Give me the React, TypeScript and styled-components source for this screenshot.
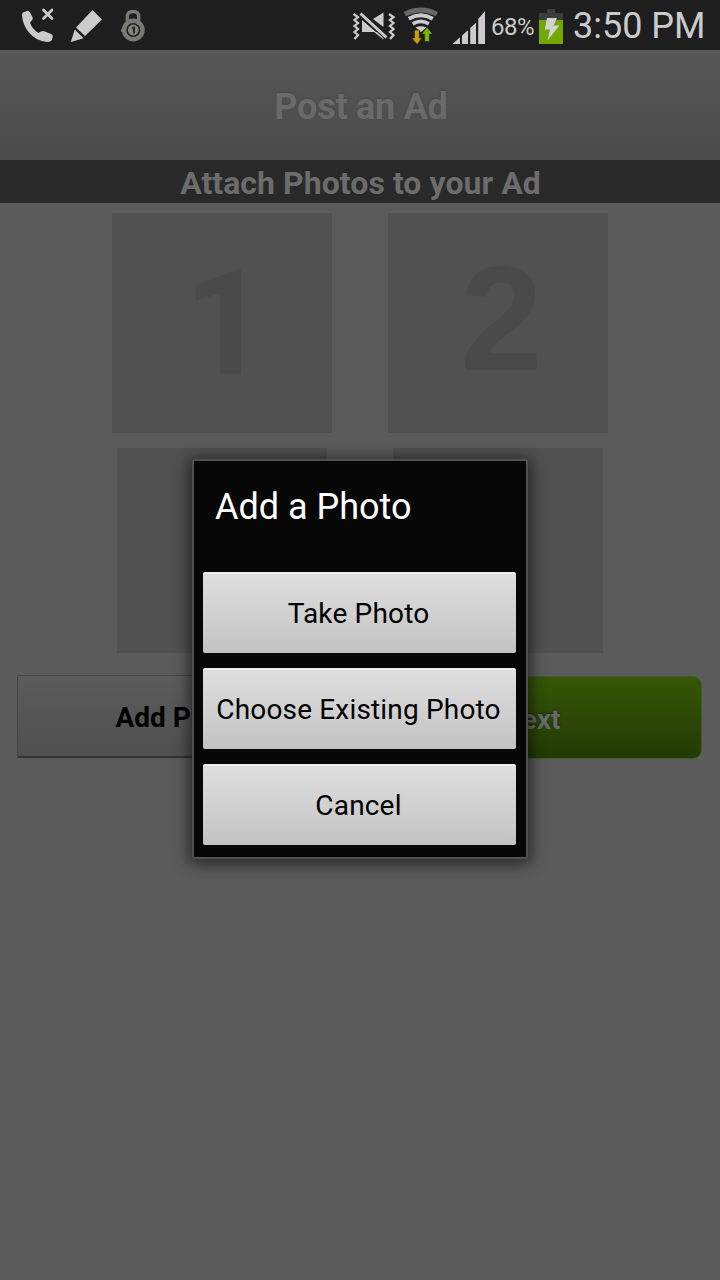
import React from "react";
import styled, { createGlobalStyle } from "styled-components";

const GlobalStyle = createGlobalStyle`
  * { box-sizing: border-box; }
  body { margin: 0; background: #5b5b5b; font-family: Roboto, "Liberation Sans", sans-serif; }
  button { font-family: inherit; border: 0; padding: 0; }
`;

const Screen = styled.div`
  position: relative;
  width: 720px;
  height: 1280px;
  overflow: hidden;
  background: #5b5b5b;
`;

const StatusBar = styled.div`
  display: flex;
  justify-content: space-between;
  height: 50px;
  background: #1e1e1e;
  color: #cbcbcb;
`;

const StatusGroup = styled.div`
  display: flex;
  svg { display: block; }
`;

const BatteryLevel = styled.span`
  width: 48px;
  padding-left: 1px;
  font-size: 24px;
  line-height: 54px;
  letter-spacing: -0.5px;
  white-space: nowrap;
`;

const Clock = styled.span`
  width: 147px;
  font-size: 36px;
  line-height: 53px;
  white-space: nowrap;
`;

const Header = styled.header`
  display: flex;
  align-items: center;
  justify-content: center;
  height: 110px;
  padding: 4px 0 0 2px;
  background: linear-gradient(#575757, #4b4b4b);
  color: #6a6a6a;
  font-size: 36px;
  font-weight: 700;
  letter-spacing: -0.25px;
  text-shadow: 0 -1px 2px #484848;
`;

const SectionTitle = styled.h1`
  display: flex;
  align-items: center;
  justify-content: center;
  height: 43px;
  margin: 0;
  padding: 3px 0 0 1px;
  background: #292929;
  color: #6c6c6c;
  font-size: 32px;
  font-weight: 700;
  letter-spacing: 0.05px;
`;

const SlotRow = styled.div<{ $gap: number; $top: number }>`
  display: flex;
  justify-content: center;
  gap: ${(p) => p.$gap}px;
  padding-top: ${(p) => p.$top}px;
`;

const Slot = styled.div<{ $w: number; $h: number; $serifless?: boolean }>`
  display: flex;
  align-items: center;
  justify-content: center;
  width: ${(p) => p.$w}px;
  height: ${(p) => p.$h}px;
  padding: ${(p) => (p.$serifless ? "4px 0 0 7px" : "0 0 8px 7px")};
  background: #515151;
  color: #4a4a4a;
  font-family: ${(p) => (p.$serifless ? "Roboto" : '"Liberation Sans"')}, sans-serif;
  font-size: ${(p) => (p.$serifless ? 146 : 148)}px;
  line-height: 1;
  font-weight: 700;
`;

const Actions = styled.div`
  display: grid;
  grid-template-columns: 1fr 1fr;
  gap: 8px;
  padding: 22px 18px 0 17px;
`;

const AddButton = styled.button`
  height: 83px;
  padding: 2px 10px 0 0;
  border: 1px solid #464646;
  border-bottom: 2px solid #333;
  border-radius: 2px;
  background: linear-gradient(#5b5b5b, #505050);
  color: #000;
  font-size: 28px;
  font-weight: 700;
`;

const NextButton = styled.button`
  height: 83px;
  margin-top: 1px;
  padding: 4px 3px 0 0;
  border: 1px solid #47582f;
  border-radius: 9px;
  background: linear-gradient(#365706, #233a04);
  color: #686868;
  font-size: 28px;
  font-weight: 700;
  text-shadow: 0 -1px 2px #182800;
`;

const Dialog = styled.section`
  position: absolute;
  left: 192px;
  top: 459px;
  width: 336px;
  height: 400px;
  padding: 0 10px 0 9px;
  border: 2px solid #515151;
  border-radius: 3px;
  background: #070707;
  box-shadow: 0 2px 15px 3px rgba(0, 0, 0, 0.58);
`;

const DialogTitle = styled.h2`
  height: 111px;
  margin: 0;
  padding-left: 12px;
  color: #fff;
  font-size: 36px;
  font-weight: 400;
  line-height: 93px;
`;

const Choices = styled.div`
  display: flex;
  flex-direction: column;
  gap: 15px;
`;

const Choice = styled.button`
  height: 81px;
  padding-right: 2px;
  border-top: 2px solid #ececec;
  border-radius: 2px;
  background: linear-gradient(#dedede, #c3c3c3);
  color: #000;
  font-size: 28px;
  letter-spacing: 0.17px;
  white-space: nowrap;
`;

const NotificationIcons = () => (
  <svg width="160" height="50" viewBox="0 0 160 50" fill="#cbcbcb">
    <path d="M23 12.5 L27.5 10.8 Q29 10.7 30 12.5 L32.7 17.5 Q33.2 19.2 31.5 20.8 L30 22.5 Q32 29 38.5 33 L41 31.6 Q42.5 30.5 44.2 31.2 L51.2 34 Q53 35 52.8 36.5 L52 40 Q50.5 42 47 42 Q36 41 29 32.5 Q22.5 25 22 15 Q22 13.4 23 12.5Z" />
    <path d="M43.5 10 L52 18.5 M52 10 L43.5 18.5" stroke="#cbcbcb" strokeWidth="2.7" strokeLinecap="round" />
    <path d="M92.5 10 L102 19.5 L85 36 L76 27.5Z M74.8 29.5 L83.5 38.2 L70.8 42Z" />
    <g fill="none" stroke="#797974">
      <path d="M127.3 25 V16.5 Q127.3 11.5 133 11.5 Q138.7 11.5 138.7 16.5 V25" strokeWidth="3.4" />
      <circle cx="133.3" cy="30" r="9.2" strokeWidth="4.5" />
    </g>
    <circle cx="133.3" cy="30" r="5.4" fill="#858580" />
    <path d="M131 28.3 L133.5 26.5 H135 V33.5 H133 V29Z" fill="#262626" />
    <path d="M121 29 H124 V32 H121Z" fill="#797974" />
  </svg>
);

const SignalIcons = () => (
  <svg width="150" height="50" viewBox="340 0 150 50" fill="#cbcbcb">
    <g fill="none" stroke="#cbcbcb" strokeWidth="2.3">
      <path d="M353.5 14 L358 17 L354.5 20 L358 23 L354.5 26 L358 29 L354.5 32 L358 35 L354.5 39" />
      <path d="M389 14 L393.5 17 L390 20 L393.5 23 L390 26 L393.5 29 L390 32 L393.5 35 L390 39" />
    </g>
    <path d="M362 20 L376 32 H362Z M373 19 L383.5 12.5 V27Z M374 32 H378 L383.5 36.5 V39.5Z" />
    <path d="M360.5 14 L386.5 37" stroke="#1e1e1e" strokeWidth="5.6" />
    <path d="M360.5 13.5 L386.5 37.5" stroke="#cbcbcb" strokeWidth="3" />
    <g fill="none">
      <path d="M404.8 14.2 Q420.8 5.8 436.8 14.2" stroke="#686868" strokeWidth="4.8" />
      <path d="M408.8 18.7 Q420.8 12 432.8 18.7" stroke="#cbcbcb" strokeWidth="4" />
      <path d="M412.7 23.8 Q420.8 19 428.9 23.8" stroke="#cbcbcb" strokeWidth="3.7" />
    </g>
    <path d="M415.5 27.6 Q420.8 24.8 426.5 27.6 L421 32Z" />
    <path d="M414.5 30 H419.3 V38 H422 L417 44.5 L411.8 38 H414.5Z" fill="#c99c0a" stroke="#1e1e1e" strokeWidth=".6" />
    <path d="M424.6 41.5 V34 H421.6 L427 27.3 L432.5 34 H429.4 V41.5Z" fill="#78b800" stroke="#1e1e1e" strokeWidth=".6" />
    <path d="M452.5 44 L460 37.3 V44Z M462 35.5 L468 30.2 V44 H462Z M470.2 28 L476 22.8 V44 H470.2Z M478.2 19 L485 11 V44 H478.2Z" />
  </svg>
);

const BatteryIcon = () => (
  <svg width="35" height="50" viewBox="538 0 35 50">
    <path d="M547 9 H555 V13 H563 V21 H539 V13 H547Z" fill="#3c3c3c" />
    <path d="M539 20 H563 V44 H539Z" fill="#72a800" />
    <path d="M547 18 H557 L553.5 25.5 H559.5 L547.5 40.5 L550 29.5 H544.8Z" fill="#d2d2d2" />
  </svg>
);

export default function App() {
  return (
    <Screen>
      <GlobalStyle />
      <StatusBar>
        <StatusGroup><NotificationIcons /></StatusGroup>
        <StatusGroup>
          <SignalIcons />
          <BatteryLevel>68%</BatteryLevel>
          <BatteryIcon />
          <Clock>3:50 PM</Clock>
        </StatusGroup>
      </StatusBar>
      <Header>Post an Ad</Header>
      <SectionTitle>Attach Photos to your Ad</SectionTitle>
      <SlotRow $gap={56} $top={10}>
        <Slot $w={220} $h={220} $serifless>1</Slot>
        <Slot $w={220} $h={220}>2</Slot>
      </SlotRow>
      <SlotRow $gap={66} $top={15}>
        <Slot $w={210} $h={205} />
        <Slot $w={210} $h={205} />
      </SlotRow>
      <Actions>
        <AddButton>Add Photo</AddButton>
        <NextButton>Next</NextButton>
      </Actions>
      <Dialog role="dialog">
        <DialogTitle>Add a Photo</DialogTitle>
        <Choices>
          <Choice>Take Photo</Choice>
          <Choice>Choose Existing Photo</Choice>
          <Choice>Cancel</Choice>
        </Choices>
      </Dialog>
    </Screen>
  );
}
